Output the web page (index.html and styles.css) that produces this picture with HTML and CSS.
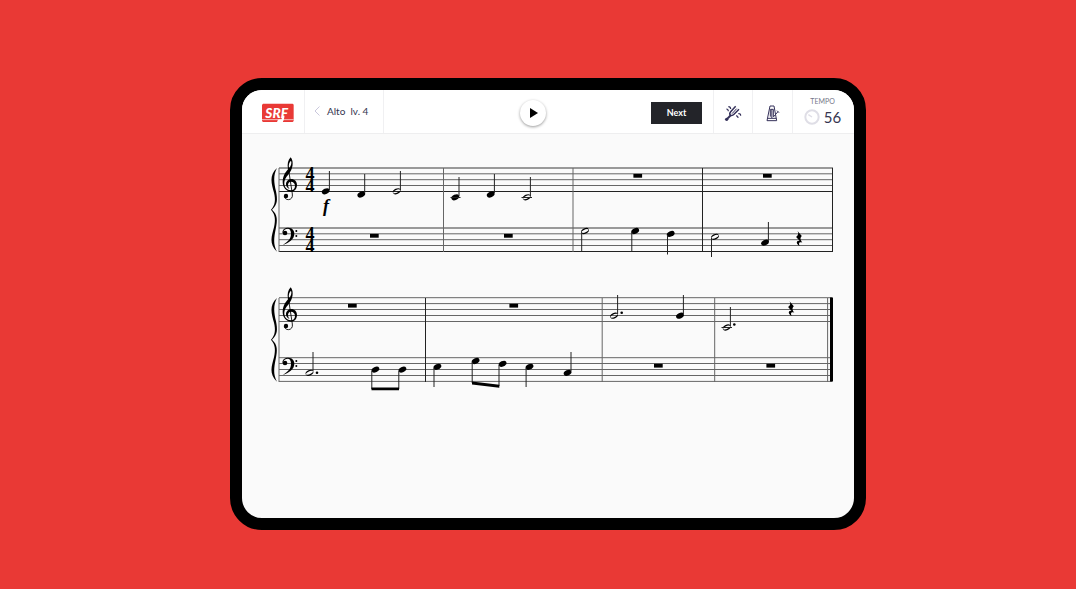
FILE: index.html
```html
<!DOCTYPE html>
<html lang="en">
<head>
<meta charset="utf-8">
<meta name="viewport" content="width=device-width, initial-scale=1">
<title>Alto lv. 4</title>
<link rel="stylesheet" href="styles.css">
</head>
<body class="page">
<svg class="defs" width="0" height="0" aria-hidden="true">
  <defs>
    <!-- Brace and clefs are drawn at three units per pixel -->
    <g id="brace"><path transform="scale(.3333)" d="M45 60C20 82 29 108 36 134C41 155 40 171 27 185C40 200 41 215 36 238C29 264 20 288 45 311C33 290 36 269 41 244C47 216 47 200 30 185C47 170 47 156 42 130C36 104 33 82 45 60Z"/></g>
    <g id="treble">
      <g transform="scale(.3333)">
        <path fill-rule="evenodd" d="M86 28C78 36 75 48 78 64C70 73 62 85 62 102C62 119 74 131 87 131C98 131 105 122 105 111C105 100 97 93 88 93C78 93 72 101 72 109C72 115 76 121 83 123C79 118 78 114 78 110C79 104 82 101 87 101C94 101 99 106 99 114C99 122 94 127 87 127C75 127 67 118 67 106C67 92 76 84 83 74C90 64 92 55 92 46C92 38 89 32 86 28ZM87 38C82 42 79 50 81 60C87 54 90 45 87 38Z"/>
        <path d="M79 60L91 138C93 148 87 155 79 155C73 155 68 151 67 146" fill="none" stroke="#000" stroke-width="2.6"/>
        <circle cx="72" cy="144" r="6.5"/>
      </g>
    </g>
    <g id="bass">
      <g transform="scale(.3333)">
        <path d="M61 256C61 244 69 239 79 239C91 239 97 248 97 257C97 274 80 285 62 291C78 281 87 272 87 257C87 248 84 242 77 242C71 242 66 245 65 249Z"/>
        <circle cx="69" cy="255" r="7"/><circle cx="103" cy="249" r="3"/><circle cx="103" cy="264" r="3"/>
      </g>
    </g>
    <ellipse id="solid" rx="4.1" ry="2.7" transform="rotate(-25)"/>
    <g id="open"><path fill-rule="evenodd" transform="rotate(-25)" d="M-4.1 0A4.1 2.7 0 1 1 4.1 0A4.1 2.7 0 1 1-4.1 0ZM-3.5 .4A3.5 1.3 0 1 0 3.5-.4A3.5 1.3 0 1 0-3.5 .4Z"/></g>
    <rect id="bar-rest" x="-4.3" y="-1.9" width="8.7" height="3.8"/>
    <path id="beat-rest" d="M-1.5-7.5L2.8-2.5C.8-.5 1.2 1 3.3 4C.3 2.8-.8 4 .7 7.3C-3.3 5.3-3 1.6 .6 2.2L-2.9-1.7C-.5-3.5-.2-5.3-1.5-7.5Z"/>
  </defs>
</svg>

<div class="tablet">
  <header class="toolbar">
    <a class="brand" href="#" aria-label="SRF">
      <svg class="brand-logo" viewBox="0 0 96 60">
        <path d="M3 2H92L95 5V54L92 57H3L0 54V5Z" fill="#e93935"/>
        <path d="M0 50H95" stroke="#fff" stroke-width="2"/>
        <path d="M64 38Q63 52 58 56" fill="none" stroke="#fff" stroke-width="7"/>
        <ellipse cx="54" cy="55" rx="8" ry="6" fill="#fff"/>
        <text class="brand-text" x="10" y="45">SRF</text>
      </svg>
    </a>
    <a class="level" href="#">
      <svg class="level-arrow" viewBox="0 0 6 10"><path d="M5.5 .5L1 5L5.5 9.500" fill="none" stroke="#c9c7dc"/></svg>
      <span>Alto&nbsp; lv. 4</span>
    </a>
    <div class="transport">
      <button class="play" type="button" aria-label="Play">
        <svg class="play-icon" viewBox="0 0 8 10"><path d="M0 0L8 5L0 10Z"/></svg>
      </button>
      <button class="next" type="button">Next</button>
    </div>
    <button class="tool" type="button" aria-label="Tuner">
      <svg class="tool-icon" viewBox="0 0 54 54" fill="none" stroke="#35315a">
        <circle cx="8" cy="46" r="5" fill="#35315a" stroke="none"/>
        <path d="M8 46L21 33" stroke-width="6"/>
        <path d="M35 7L20 23Q15 29 19 33Q24 37 30 31L45 16" stroke-width="4.500"/>
        <path d="M24 29L38 14" stroke-width="3"/>
        <path d="M7 15Q13 15 13 22M13 8Q20 8 20 15M36 36Q42 35 42 42M43 29Q50 28 50 35" stroke-width="3.500"/>
      </svg>
    </button>
    <button class="tool" type="button" aria-label="Metronome">
      <svg class="tool-icon" viewBox="0 0 54 54" fill="none" stroke="#35315a" stroke-width="3">
        <path d="M18 6H30L38 50H9ZM11 43H37M19 38V16H28V38M23.500 16V42"/>
        <path d="M28 39L42 23M39 20L45 26" stroke-width="3"/>
      </svg>
    </button>
    <div class="tempo">
      <span class="tempo-label">TEMPO</span>
      <span class="tempo-value">
        <svg class="tempo-dial" viewBox="0 0 48 48" fill="none" stroke="#dfdee6"><circle cx="24" cy="24" r="20" stroke-width="6"/><path d="M13 17L24 24" stroke-width="4"/></svg>
        56
      </span>
    </div>
  </header>

  <main class="score">
    <svg class="system" viewBox="242 154 612 110" role="img" aria-label="Measures 1 to 4">
      <g fill="none">
        <path class="line-soft" d="M279 168H833M279 228H833"/>
        <path class="line" d="M279 173.800H833M279 179.700H833M279 185.500H833M279 233.800H833M279 239.700H833M279 245.500H833"/>
        <path class="line-dark" d="M279 191.500H833M279 251.500H833"/>
        <path class="line" d="M279 168V252M443.500 168V252M573 168V252"/>
        <path class="line-dark" d="M702.500 168V252M832.500 168V252"/>
      </g>
      <use href="#brace" x="262" y="148"/><use href="#treble" x="262" y="148"/><use href="#bass" x="262" y="148"/>
      <g class="meter">
        <text x="310" y="180">4</text><text x="310" y="192">4</text>
        <text x="310" y="240">4</text><text x="310" y="252">4</text>
      </g>
      <text class="dynamic" x="326" y="212">f</text>
      <use href="#solid" transform="translate(325.700 191.300)"/>
      <use href="#solid" transform="translate(361.300 194.500)"/>
      <use href="#open" transform="translate(396.700 191.300)"/>
      <use href="#solid" transform="translate(455.300 197.300)"/>
      <use href="#solid" transform="translate(490.700 194.500)"/>
      <use href="#open" transform="translate(526.700 197.300)"/>
      <use href="#open" transform="translate(585 231)"/>
      <use href="#solid" transform="translate(635.200 231)"/>
      <use href="#solid" transform="translate(670.700 233.900)"/>
      <use href="#open" transform="translate(715 236.800)"/>
      <use href="#solid" transform="translate(765 242.600)"/>
      <path class="stem" d="M329.400 171V190M364.700 174V193M400.400 171V190M459 177V196M494.400 174V193M530.400 177V196M581.700 232V251M631.800 232V251M667.500 235V254.500M711.500 238V257M768.400 222V241M450.500 197.500H460.500M521.500 197.500H532"/>
      <use href="#bar-rest" x="374.300" y="235.800"/><use href="#bar-rest" x="508.300" y="235.800"/>
      <use href="#bar-rest" x="637.700" y="175.800"/><use href="#bar-rest" x="767.300" y="175.800"/>
      <use href="#beat-rest" x="799" y="238.600"/>
    </svg>

    <svg class="system" viewBox="242 284 612 110" role="img" aria-label="Measures 5 to 8">
      <g fill="none">
        <path class="line" d="M279 297.700H832M279 303.600H832M279 309.500H832M279 315.500H832M279 321.500H832M279 357.700H832M279 363.500H832M279 369.500H832M279 375.500H832M279 381.400H832"/>
        <path class="line" d="M279 298V382M602.200 298V382M714.700 298V382M827.600 298V382"/>
        <path class="line-dark" d="M425.500 298V382"/>
      </g>
      <rect x="830" y="297.500" width="3" height="84"/>
      <use href="#brace" x="262" y="278"/><use href="#treble" x="262" y="278"/><use href="#bass" x="262" y="278"/>
      <use href="#open" transform="translate(309.500 372.800)"/>
      <use href="#solid" transform="translate(375.400 369.600)"/>
      <use href="#solid" transform="translate(402.400 369.600)"/>
      <use href="#solid" transform="translate(437.400 366.800)"/>
      <use href="#solid" transform="translate(475.600 361)"/>
      <use href="#solid" transform="translate(502.600 363.800)"/>
      <use href="#solid" transform="translate(529.500 366.800)"/>
      <use href="#solid" transform="translate(567.600 372.800)"/>
      <use href="#open" transform="translate(614 315.700)"/>
      <use href="#solid" transform="translate(680 315.700)"/>
      <use href="#open" transform="translate(726.700 327.500)"/>
      <path class="stem" d="M313 352V371M371.800 371V389M398.800 371V389M434 368V387M472.200 362V383M499 365V386M526.100 368V387M571 352V371M617.600 295V314M683.400 295V314M730.400 307V326M721.500 327.500H732"/>
      <path d="M371.500 387.500H399V390.300H371.500ZM472 381.500L499.300 384.700V387.700L472 384.500Z"/>
      <circle cx="317" cy="372.700" r="1.300"/><circle cx="621.700" cy="312.800" r="1.300"/><circle cx="734.300" cy="324.500" r="1.300"/>
      <use href="#bar-rest" x="352.300" y="305.700"/><use href="#bar-rest" x="513.700" y="305.700"/>
      <use href="#bar-rest" x="658.300" y="365.700"/><use href="#bar-rest" x="770.700" y="365.700"/>
      <use href="#beat-rest" x="791" y="308.700"/>
    </svg>
  </main>
</div>
</body>
</html>
```
FILE: styles.css
```css
* { box-sizing: border-box; }

.page {
  display: flex;
  min-height: 100vh;
  margin: 0;
  padding: 78px 210px 59px 230px;
  background: #e93935;
  color: #35354f;
  font-family: Lato, "Liberation Sans", sans-serif;
}

.defs { position: absolute; }

.tablet {
  flex: 1;
  min-width: 0;
  border: 12px solid #000;
  border-radius: 32px;
  background: #fafafa;
  overflow: hidden;
}

.toolbar {
  display: grid;
  grid-template-columns: 62px 79px 1fr 39px 40px 62px;
  min-height: 44px;
  background: #fff;
  border-bottom: 1px solid #eeeeef;
}

.toolbar > * + * { border-left: 1px solid #f0f0f2; }

.brand {
  display: flex;
  align-items: center;
  padding: 2px 0 0 20px;
}

.brand-logo { width: 32px; height: 20px; }

.brand-text {
  fill: #fff;
  font-size: 41px;
  font-style: italic;
  font-weight: 900;
}

.level {
  display: flex;
  align-items: center;
  gap: 7px;
  padding: 0 0 2px 9px;
  color: inherit;
  font-size: 10px;
  text-decoration: none;
  white-space: nowrap;
}

.level-arrow { width: 6px; height: 10px; }

.transport {
  display: grid;
  grid-template-columns: 13fr auto 10fr auto;
  align-items: center;
  padding: 2px 11px 0 0;
}

button {
  padding: 0;
  border: 0;
  background: none;
  color: inherit;
  font: inherit;
}

.play {
  display: flex;
  grid-column: 2;
  align-items: center;
  justify-content: center;
  width: 26px;
  height: 26px;
  padding-left: 2px;
  border-radius: 50%;
  background: #fff;
  box-shadow: 0 1px 3px #0006;
}

.play-icon { width: 8px; height: 10px; }

.next {
  grid-column: 4;
  width: 51px;
  height: 22px;
  background: #232429;
  color: #fff;
  font-size: 9px;
  font-weight: 700;
}

.tool {
  display: flex;
  align-items: center;
  justify-content: center;
  padding-top: 2px;
}

.tool-icon { width: 18px; height: 18px; }

.tempo {
  display: flex;
  flex-direction: column;
  align-items: center;
  padding: 7px 2px 0 0;
}

.tempo-label {
  color: #77778a;
  font-size: 7px;
  line-height: 9px;
}

.tempo-value {
  display: flex;
  align-items: center;
  gap: 4px;
  font-size: 15px;
  line-height: 22px;
}

.tempo-dial { width: 16px; height: 16px; }

.score {
  display: flex;
  flex-direction: column;
  gap: 20px;
  padding-top: 20px;
}

.system { display: block; width: 100%; height: auto; }

.line-soft { stroke: #999; stroke-width: 2; }
.line { stroke: #666; stroke-width: 1; }
.line-dark { stroke: #222; stroke-width: 1; }
.stem { fill: none; stroke: #222; stroke-width: 1; }

.meter {
  font-family: "Liberation Serif", serif;
  font-size: 18px;
  font-weight: 700;
  text-anchor: middle;
}

.dynamic {
  font-family: "Liberation Serif", serif;
  font-size: 18px;
  font-style: italic;
  font-weight: 700;
  text-anchor: middle;
}
```
